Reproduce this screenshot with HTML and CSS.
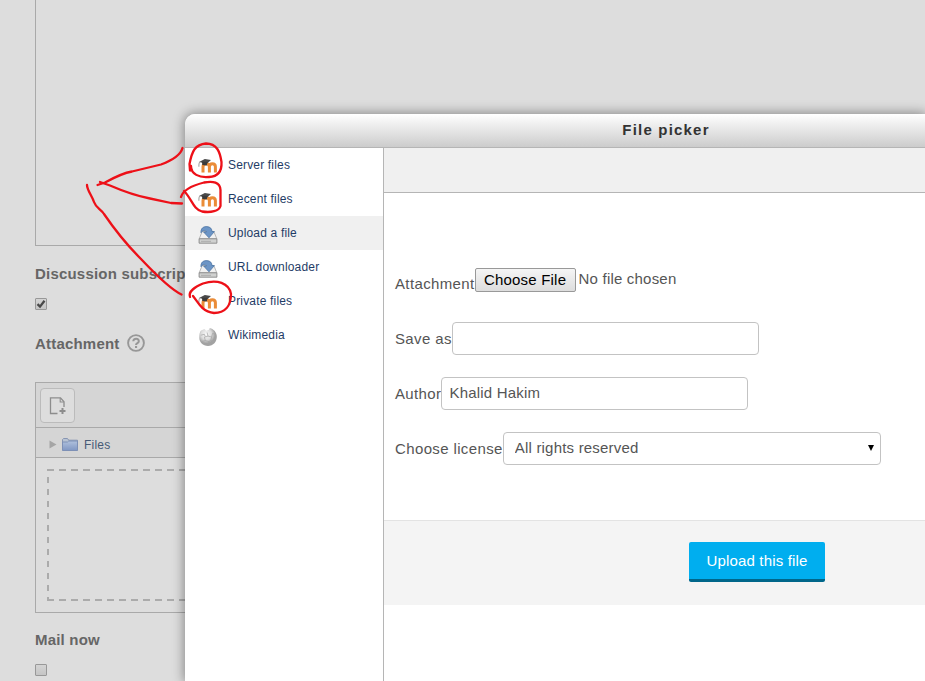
FILE: index.html
```html
<!DOCTYPE html>
<html lang="en">
<head>
  <meta charset="UTF-8">
  <meta name="viewport" content="width=device-width, initial-scale=1.0">
  <title>File picker</title>
  <link rel="stylesheet" href="styles.css">
</head>
<body>
  <!-- Shared icons -->
  <svg class="sprite" width="0" height="0">
    <symbol id="moodle" viewBox="0 0 20 16">
      <path d="M5 15.500V9.800c0-4.200 6.400-4.200 6.400 0v5.700M11.400 9.800c0-4.200 6-4.200 6 0v5.700" fill="none" stroke="#ea8c38" stroke-width="3"/>
      <path d="M1 5.100 6.800 2l6.200.9-4.300 3.800z" fill="#4a4a4a"/>
      <path d="M4 4.700 9.500 5.100 8.800 8.600 4.300 8z" fill="#3b3b3b"/>
      <path d="M1.500 5.200C.8 7 .9 8.500.9 9.700" fill="none" stroke="#777" stroke-width=".8"/>
    </symbol>
    <symbol id="drive" viewBox="0 0 20 18">
      <path d="M4.200 5.500h11.600l3 7.300H1.200z" fill="#f1f1f1" stroke="#a7a7a7" stroke-width=".8"/>
      <path d="M1.100 12.800h17.800v4.400H1.100z" fill="#d0d1d0" stroke="#888" stroke-width=".9"/>
      <path d="M3 15.300h10" stroke="#aaa"/>
      <path d="M3 6.700C2.600 2.400 5.500.4 8.800.6c3.600.2 5.100 2.200 5.200 5h2.400l-5.400 6.200-5.400-5.800h2.800C7.900 4 5 3.800 3 6.700z" fill="#6c95c6" stroke="#4a72a2" stroke-width=".8"/>
    </symbol>
  </svg>

  <div class="page">
    <div class="editor"></div>
    <h3 class="label">Discussion subscription</h3>
    <span class="checkbox">
      <svg width="10" height="10" viewBox="0 0 10 10"><path d="M1.500 5.200 4 7.600 8.500 1.800" fill="none" stroke="#484848" stroke-width="2.300"/></svg>
    </span>
    <h3 class="label attachment">Attachment
      <svg width="18" height="18" viewBox="0 0 18 18">
        <circle cx="9" cy="9" r="7.900" fill="none" stroke="#979797" stroke-width="1.900"/>
        <path d="M6.300 7.200c0-3.300 5.500-3.200 5.500 0C11.800 9.100 9 9 9 11" fill="none" stroke="#979797" stroke-width="2"/>
        <path d="M8 12h2.100v2H8z" fill="#979797"/>
      </svg>
    </h3>
    <div class="filemanager">
      <div class="toolbar">
        <button class="add" type="button">
          <svg width="18" height="18" viewBox="0 0 18 18" fill="none" stroke="#8d8d8d">
            <path d="M8.500 16.500h-7V.8h10l3.500 4V10" stroke-width="1.300"/>
            <path d="M11.200 1v4H15" stroke-width="1.100"/>
            <path d="M13.500 11v6M10.500 14h6" stroke-width="2"/>
          </svg>
        </button>
      </div>
      <div class="pathbar">
        <svg width="8" height="9" viewBox="0 0 8 9"><path d="M.5.500 7.500 4.500.5 8.500z" fill="#a5a5a5"/></svg>
        <svg class="folder" width="16" height="13" viewBox="0 0 16 13">
          <defs>
            <linearGradient id="blue" x2="0" y2="1"><stop stop-color="#b0c1dd"/><stop offset="1" stop-color="#8097c3"/></linearGradient>
          </defs>
          <path d="M.5 12V1.500l1-1h4l1.200 1.700h8.800V12z" fill="#b8c3d3" stroke="#8795b2"/>
          <path d="M.5 4h5l1.200-1h8.800v9.500H.5z" fill="url(#blue)" stroke="#7d90b6"/>
        </svg>
        <span>Files</span>
      </div>
      <div class="dropzone">
        <svg width="400" height="132">
          <path d="M0 1H400M0 131H400" stroke="#ababab" stroke-width="2" stroke-dasharray="7 5"/>
          <path d="M1 0V132" stroke="#ababab" stroke-width="2" stroke-dasharray="2 6 6 6 6 6 6 6 6 6 6 6 6 6 6 6 6 6 6 6 6 6 6 6"/>
        </svg>
      </div>
    </div>
    <h3 class="label mail">Mail now</h3>
    <span class="checkbox"></span>
  </div>

  <div class="dialog">
    <div class="dialog-header">File picker</div>
    <div class="dialog-body">
      <ul class="repositories">
        <li><svg class="moodle"><use href="#moodle"/></svg>Server files</li>
        <li><svg class="moodle"><use href="#moodle"/></svg>Recent files</li>
        <li class="active"><svg class="drive"><use href="#drive"/></svg>Upload a file</li>
        <li><svg class="drive"><use href="#drive"/></svg>URL downloader</li>
        <li><svg class="moodle"><use href="#moodle"/></svg>Private files</li>
        <li>
          <svg class="drive" viewBox="0 0 20 20">
            <defs>
              <radialGradient id="globe" cx=".4" cy=".35"><stop stop-color="#fafafa"/><stop offset=".6" stop-color="#dcdcdc"/><stop offset="1" stop-color="#a2a2a2"/></radialGradient>
            </defs>
            <path d="M2 3 6 1l2 2 3-1 1-2c4 1 7.500 4.500 7.800 9 .3 6.500-4 11-9.800 11S.3 15.500.3 10.500C.3 7 .8 5 2 3z" fill="url(#globe)"/>
            <path d="M2 8l4-1 1 3 3-1-1-4M6 10l1 4-4 1M7 14l4 1v4M10 9l4 1 1-4 3 1M14 10l-1 4 4 1M13 14l-2 1" fill="none" stroke="#a5a5a5" stroke-width=".8"/>
          </svg>Wikimedia
        </li>
      </ul>
      <div class="content">
        <div class="content-toolbar"></div>
        <form>
          <div class="row file-row">
            <label>Attachment</label>
            <button class="choose" type="button">Choose File</button>
            <span class="nofile">No file chosen</span>
          </div>
          <div class="row">
            <label for="title">Save as</label>
            <input type="text" id="title">
          </div>
          <div class="row">
            <label for="author">Author</label>
            <input type="text" id="author" value="Khalid Hakim">
          </div>
          <div class="row">
            <label for="license">Choose license</label>
            <select id="license"><option>All rights reserved</option></select>
            <svg class="arrow" width="6" height="6" viewBox="0 0 6 6"><path d="M0 0H6L3 6z"/></svg>
          </div>
        </form>
        <div class="submit">
          <button class="upload" type="button">Upload this file</button>
        </div>
      </div>
    </div>
  </div>

  <!-- Hand drawn marks -->
  <svg class="marks" width="925" height="681" viewBox="0 0 925 681">
    <path d="M97.500 185 105 182.500C115 177 123 173 132 171.500L161 164.500C173 160 181 154 182.500 148"/>
    <path d="M100 182 110 185.500C125 192 137 196 150 198.500L171 203 182 203.500"/>
    <path d="M87 185C87 190 92 196 94 202S101 209 104 214C117 233 129 247 141 259 158 277 172 290 181.500 294.500"/>
    <path d="M190 170.500 189.500 164C192 151 195 144.500 206 143.500 217 143.500 220 152 221.500 162 222 172 218 176.500 209 177 199 178 191 174 191 166"/>
    <path d="M181 197C183 190 194 185 204 182.500 213 181 220 182 220.500 190V206C219 211 211 213 202 211.500 193 209 192 199 184 191"/>
    <path d="M190 297C188 291 195 287 203 283.500 217 279 229 283 231 294 231 306 225 313 214 313 201 311 198 302 193 296"/>
  </svg>
</body>
</html>
```
FILE: styles.css
```css
* {
  box-sizing: border-box;
}
body {
  margin: 0;
  height: 681px;
  position: relative;
  overflow: hidden;
  background: #ddd;
  font-family: "Liberation Sans", Arial, sans-serif;
  color: #555;
}
button, input, select {
  font-family: inherit;
}
svg {
  display: block;
  flex: none;
}
.sprite {
  position: absolute;
}

/* Page behind the dialog */
.page {
  padding-left: 35px;
}
.editor {
  height: 246px;
  border-left: 1px solid #a9a9a9;
  border-bottom: 1px solid #a9a9a9;
}
.label {
  display: flex;
  align-items: center;
  height: 20px;
  margin: 17px 0 15px;
  font-size: 15px;
  letter-spacing: 0.2px;
  color: #666;
}
.checkbox {
  display: block;
  width: 12px;
  height: 12px;
  border: 1px solid #989898;
  border-radius: 1px;
  background: linear-gradient(#d4d4d4, #c5c5c5);
}
.attachment {
  margin: 23px 0 29px;
  gap: 7px;
}
.filemanager {
  height: 231px;
  border: 1px solid #a9a9a9;
}
.toolbar {
  height: 45px;
  padding: 5px 4px;
  background: #d5d5d5;
  border-bottom: 1px solid #a9a9a9;
}
.add {
  display: flex;
  align-items: center;
  justify-content: center;
  width: 35px;
  height: 35px;
  padding: 0;
  border: 1px solid #bbb;
  border-radius: 4px;
  background: #ddd;
}
.pathbar {
  display: flex;
  align-items: center;
  height: 30px;
  padding: 4px 0 0 13px;
  background: #d5d5d5;
  border-bottom: 1px solid #a9a9a9;
  font-size: 12px;
  letter-spacing: 0.2px;
  color: #475a75;
}
.folder {
  margin: 0 6px 0 5px;
}
.dropzone {
  margin: 11px 0 0 11px;
  overflow: hidden;
}
.mail {
  margin: 16px 0 15px;
}

/* Dialog */
.dialog {
  position: absolute;
  top: 114px;
  right: 0;
  bottom: 0;
  left: 185px;
  display: flex;
  flex-direction: column;
  background: #fff;
  border-radius: 10px 0 0 0;
  box-shadow: 0 0 12px 1px rgba(0, 0, 0, 0.4);
}
.dialog-header {
  height: 34px;
  padding-left: 222px;
  line-height: 31px;
  text-align: center;
  font-size: 15px;
  font-weight: bold;
  letter-spacing: 1.2px;
  color: #333;
  border-bottom: 1px solid #b5b5b5;
  border-radius: 10px 0 0 0;
  background: linear-gradient(#fff, #ccc);
}
.dialog-body {
  display: flex;
  flex: 1;
}
.repositories {
  width: 199px;
  margin: 0;
  padding: 0;
  list-style: none;
  border-right: 1px solid #b5b5b5;
}
.repositories li {
  display: flex;
  align-items: center;
  height: 34px;
  padding-left: 13px;
  font-size: 12px;
  letter-spacing: 0.17px;
  color: #1f3c66;
}
.repositories .active {
  background: #f0f0f0;
}
.moodle {
  width: 20px;
  height: 16px;
  margin-right: 10px;
}
.drive {
  width: 20px;
  height: 18px;
  margin: 3px 10px 0 0;
}
.content {
  flex: 1;
}
.content-toolbar {
  height: 45px;
  background: #f0f0f0;
  border-bottom: 1px solid #b5b5b5;
}
form {
  height: 327px;
  padding: 74px 0 0 11px;
}
.row {
  display: flex;
  align-items: center;
  height: 33px;
  margin-bottom: 22px;
  font-size: 15px;
  letter-spacing: 0.2px;
}
.row label {
  margin-top: -1px;
  letter-spacing: 0.37px;
}
.row input, .row select {
  height: 33px;
  border: 1px solid #c3c3c3;
  border-radius: 4px;
  background: #fff;
  color: #555;
  font-size: 15px;
  letter-spacing: 0.2px;
}
.row input {
  width: 307px;
  padding: 0 7px 2px;
}
.row select {
  width: 378px;
  padding: 0 11px 2px;
  appearance: none;
}
.arrow {
  margin: -1px 0 0 -13px;
}
.choose {
  width: 101px;
  height: 24px;
  margin-top: -7px;
  padding: 0 0 2px;
  border: 1px solid #999;
  border-radius: 2px;
  background: linear-gradient(#f5f5f5, #ddd);
  font-size: 15px;
  letter-spacing: 0.2px;
  color: #000;
}
.nofile {
  margin: -11px 0 0 3px;
}
.submit {
  display: flex;
  justify-content: center;
  height: 85px;
  padding: 21px 0 0 205px;
  background: #f4f4f4;
  border-top: 1px solid #e3e3e3;
}
.upload {
  width: 136px;
  height: 40px;
  padding: 0;
  border: none;
  border-bottom: 3px solid #00668a;
  border-radius: 2px;
  background: #00aeef;
  color: #fff;
  font-size: 15px;
  letter-spacing: 0.17px;
}

.marks {
  position: absolute;
  top: 0;
  left: 0;
  fill: none;
  stroke: #ed1018;
  stroke-width: 2.3;
  stroke-linecap: round;
  stroke-linejoin: round;
}
```
